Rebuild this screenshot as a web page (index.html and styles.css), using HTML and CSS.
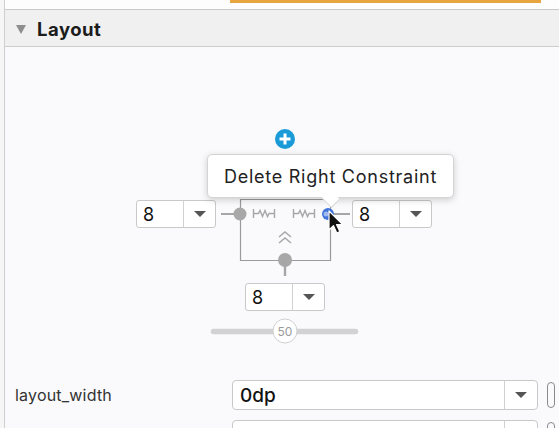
FILE: index.html
```html
<!DOCTYPE html>
<html lang="en">
<head>
    <meta charset="utf-8">
    <title>Attributes - Layout</title>
    <link rel="stylesheet" href="styles.css">
</head>
<body>
<div class="panel">
    <div class="topbar"><div class="topbar-tab"></div></div>
    <div class="section-head"><span class="caret"></span>Layout</div>

    <div class="canvas">
        <svg class="diagram" width="554" height="323" viewBox="5 47 554 323">
            <!-- add top constraint -->
            <circle cx="285" cy="139" r="10" fill="#1a9ad6"/>
            <path d="M279.5 139h11M285 133.5v11" stroke="#fff" stroke-width="3"/>

            <!-- view box -->
            <path d="M240.5 199v61.5h90V199" fill="none" stroke="#9a9a9a" stroke-width="1.2"/>
            <path d="M240 199.5h90" stroke="#9a9a9a" stroke-width="1.2"/>

            <!-- left constraint -->
            <path d="M221 214h19" stroke="#a6a6a6" stroke-width="2"/>
            <circle cx="240" cy="214" r="6.5" fill="#a8a8a8"/>
            <!-- springs -->
            <g fill="none" stroke="#a6a6a6" stroke-width="1.4">
                <path d="M253.5 209v9M253.5 213.5h5l1.5 -3 2.5 6 2.5 -6 2.5 6 1.5 -3h5M274.5 209v9"/>
                <path d="M293.5 209v9M293.5 213.5h5l1.5 -3 2.5 6 2.5 -6 2.5 6 1.5 -3h5M314.5 209v9"/>
                <path d="M279 237l6 -5 6 5M279 243l6 -5 6 5"/>
            </g>

            <!-- right constraint (hovered) -->
            <path d="M330 214h20" stroke="#a6a6a6" stroke-width="2"/>
            <circle cx="328" cy="214" r="6" fill="#3f73d9"/>
            <circle cx="326" cy="214" r="2.5" fill="#9fb8ee"/>

            <!-- bottom constraint -->
            <circle cx="285" cy="260" r="7" fill="#a8a8a8"/>
            <path d="M285 260v16" stroke="#a6a6a6" stroke-width="2.4"/>

            <!-- bias slider -->
            <path d="M213.5 331.5h142" stroke="#d2d2d2" stroke-width="5.5" stroke-linecap="round"/>
            <circle cx="285" cy="331" r="12" fill="#fff" stroke="#cfcfcf" stroke-width="1"/>
            <text x="285" y="335.5" text-anchor="middle" class="bias">50</text>

            <!-- pointer -->
            <path d="M329 211v19l4.5 -4.3 3.3 7.3 3 -1.4 -3.3 -7h6.2z" fill="#111" stroke="#fff" stroke-width="1.2" stroke-linejoin="round"/>
        </svg>

        <div class="margin-box margin-left">
            <span class="margin-value">8</span><span class="margin-arrow"></span>
        </div>
        <div class="margin-box margin-right">
            <span class="margin-value">8</span><span class="margin-arrow"></span>
        </div>
        <div class="margin-box margin-bottom">
            <span class="margin-value">8</span><span class="margin-arrow"></span>
        </div>

        <div class="tooltip">Delete Right Constraint</div>
    </div>

    <div class="props">
        <div class="prop-row">
            <div class="prop-label">layout_width</div>
            <div class="combo"><span class="combo-value">0dp</span><span class="combo-arrow"></span></div>
            <div class="prop-flag"></div>
        </div>
        <div class="prop-row">
            <div class="prop-label">layout_height</div>
            <div class="combo"><span class="combo-value">wrap_content</span><span class="combo-arrow"></span></div>
            <div class="prop-flag"></div>
        </div>
    </div>
</div>
</body>
</html>
```

FILE: styles.css
```css
* {
    margin: 0;
    padding: 0;
    box-sizing: border-box;
}
html, body {
    width: 559px;
    height: 428px;
    overflow: hidden;
}
body {
    background-color: #f6f6f7;
    font-family: Inter, "Liberation Sans", sans-serif;
    color: #222;
}
.panel {
    margin-left: 4px;
    height: 100%;
    border-left: 1px solid #cfcfcf;
    background-color: #fafafc;
}
.topbar {
    height: 10px;
    background-color: #fdfdfd;
    border-bottom: 1px solid #c9c9c9;
}
.topbar-tab {
    margin-left: 225px;
    width: 311px;
    height: 3px;
    background-color: #e8a53f;
}
.section-head {
    display: flex;
    align-items: center;
    height: 37px;
    padding-left: 11px;
    padding-top: 2px;
    background-color: #f0f0f1;
    border-bottom: 1px solid #cdcdcd;
    font-size: 18.5px;
    font-weight: 700;
    letter-spacing: 0.5px;
    color: #1c1c1c;
}
.caret {
    width: 0;
    height: 0;
    margin-right: 11px;
    border-left: 5.5px solid transparent;
    border-right: 5.5px solid transparent;
    border-top: 9px solid #8e8e8e;
}
.canvas {
    position: relative;
    height: 323px;
}
.diagram {
    position: absolute;
    left: 0;
    top: 0;
}
.bias {
    font-family: Inter, "Liberation Sans", sans-serif;
    font-size: 12px;
    fill: #9a9a9a;
}
.margin-box {
    position: absolute;
    display: flex;
    width: 80px;
    height: 28px;
    background-color: #fff;
    border: 1px solid #c9c9c9;
    border-radius: 3px;
}
.margin-left {
    left: 131px;
    top: 153px;
}
.margin-right {
    left: 347px;
    top: 153px;
}
.margin-bottom {
    left: 240px;
    top: 236px;
}
.margin-value {
    display: flex;
    align-items: center;
    width: 47px;
    padding-left: 6px;
    border-right: 1px solid #d2d2d2;
    font-size: 18px;
    color: #111;
}
.margin-arrow {
    flex: 1;
    display: flex;
    align-items: center;
    justify-content: center;
}
.margin-arrow::after,
.combo-arrow::after {
    content: "";
    border-left: 6px solid transparent;
    border-right: 6px solid transparent;
    border-top: 6px solid #555;
}
.tooltip {
    position: absolute;
    left: 202px;
    top: 107px;
    width: 247px;
    height: 44px;
    display: flex;
    align-items: center;
    justify-content: center;
    background-color: #fff;
    border: 1px solid #d4d4d4;
    border-radius: 5px;
    box-shadow: 0 2px 7px rgba(0, 0, 0, 0.18);
    font-size: 18px;
    letter-spacing: 0.75px;
    color: #222;
}
.tooltip::after {
    content: "";
    position: absolute;
    left: 115px;
    bottom: -9px;
    width: 14px;
    height: 14px;
    background-color: #fff;
    border-right: 1px solid #d4d4d4;
    border-bottom: 1px solid #d4d4d4;
    transform: rotate(45deg) scaleY(0.8);
}
.props {
    display: flex;
    flex-direction: column;
    gap: 10px;
    padding-top: 10px;
}
.prop-row {
    display: flex;
    align-items: center;
    height: 30px;
}
.prop-label {
    width: 227px;
    padding-left: 10px;
    font-size: 16px;
    letter-spacing: 0.2px;
    color: #333;
}
.combo {
    display: flex;
    width: 306px;
    height: 30px;
    background-color: #fff;
    border: 1px solid #c9c9c9;
    border-radius: 4px;
}
.combo-value {
    flex: 1;
    display: flex;
    align-items: center;
    padding-left: 7px;
    border-right: 1px solid #d2d2d2;
    font-size: 19px;
    font-weight: 500;
    color: #111;
}
.combo-arrow {
    width: 32px;
    display: flex;
    align-items: center;
    justify-content: center;
}
.prop-flag {
    width: 8px;
    height: 26px;
    margin-left: 9px;
    border: 1.5px solid #8a8a8a;
    border-radius: 4px;
}
```
